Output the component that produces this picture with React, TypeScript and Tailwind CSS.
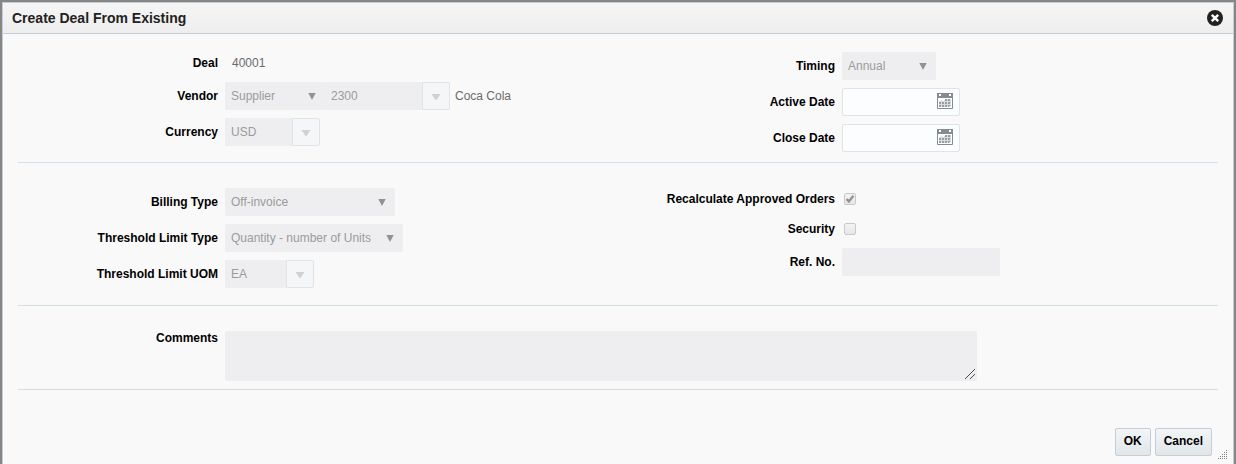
import type { ReactNode } from 'react'
import { clsx } from 'clsx'

const disabledField =
  'h-7 bg-[#eeeef0] pl-1.5 text-[12px] leading-4 text-[#9b9b9b] opacity-100'

function Row({
  id,
  label,
  side = 'left',
  short = false,
  children,
}: {
  id: string
  label: string
  side?: 'left' | 'right'
  short?: boolean
  children: ReactNode
}) {
  return (
    <div className={clsx('flex items-center gap-[7px]', short ? 'h-[22px]' : 'h-7')}>
      <label
        htmlFor={id}
        className={clsx(
          'shrink-0 text-right text-[12px] leading-4 font-bold text-black',
          side === 'left' ? 'w-[200px]' : 'w-[217px]',
        )}
      >
        {label}
      </label>
      {children}
    </div>
  )
}

function DisabledSelect({ id, value, className, label }: { id: string; value: string; className: string; label?: string }) {
  return (
    <div className={clsx('relative', className)}>
      <select
        id={id}
        disabled
        aria-label={label}
        className={clsx(disabledField, 'w-full appearance-none rounded-xs')}
      >
        <option>{value}</option>
      </select>
      <svg
        viewBox="0 0 8 7"
        className="pointer-events-none absolute top-[11px] right-[9px] h-[7px] w-2 text-[#929292]"
        aria-hidden="true"
      >
        <path d="M0.3 0H7.7L4 7Z" fill="currentColor" />
      </svg>
    </div>
  )
}

function LovInput({ id, value, className, label }: { id: string; value: string; className: string; label?: string }) {
  return (
    <div className="flex">
      <input
        id={id}
        type="text"
        disabled
        defaultValue={value}
        aria-label={label}
        className={clsx(disabledField, className)}
      />
      <button
        type="button"
        disabled
        aria-label={`Search ${label ?? id}`}
        className="flex size-7 items-center justify-center rounded-r-xs border border-[#dfe4ea] bg-[#f5f6f8] pt-0.5 text-[#d0d1d3]"
      >
        <svg viewBox="0 0 10 6" className="h-1.5 w-2.5" aria-hidden="true">
          <path d="M0.5 0H9.5L5.5 6H4.5Z" fill="currentColor" />
        </svg>
      </button>
    </div>
  )
}

function CalendarIcon() {
  return (
    <svg viewBox="0 0 16 16" className="size-4" aria-hidden="true">
      <path d="M0.5 0.5H15.5V15.5H0.5Z" fill="#fff" stroke="#868b90" />
      <path d="M0 0H16V5H0Z" fill="#868b90" />
      <path d="M2 1H4V3H2ZM12 1H14V3H12Z" fill="#fff" />
      <path d="M8 6H14V12L12 14H2V8H8Z" fill="#9a9ea2" />
      <path
        d="M2 8.5H14M2 11.5H14M4.5 7V14M7.5 7V14M10.5 6V14M13.5 6V12"
        stroke="#d9dcde"
        strokeWidth="1"
      />
    </svg>
  )
}

function DateInput({ id, label }: { id: string; label: string }) {
  return (
    <div className="relative w-[118px]">
      <input
        id={id}
        type="text"
        className="h-7 w-full rounded-xs border border-[#dfe4e7] bg-[#fcfdfe] pr-7 pl-1.5 text-[12px] text-[#333]"
      />
      <button type="button" aria-label={`Pick ${label}`} className="absolute top-[5px] right-[7px]">
        <CalendarIcon />
      </button>
    </div>
  )
}

function DisabledCheckbox({ id, checked }: { id: string; checked?: boolean }) {
  return (
    <span className="relative ml-0.5 size-3">
      <input
        id={id}
        type="checkbox"
        disabled
        defaultChecked={checked}
        className="block size-3 appearance-none rounded-xs border border-[#c9c9c9] bg-linear-to-b from-[#f3f3f3] to-[#e7e7e7]"
      />
      {checked && (
        <svg viewBox="0 0 12 12" className="pointer-events-none absolute inset-0 size-3" aria-hidden="true">
          <path d="M2.6 6L4.9 8.4L9.4 2.8" fill="none" stroke="#929292" strokeWidth="2.4" />
        </svg>
      )}
    </span>
  )
}

// dots form a triangle in the bottom right corner
function ResizeGrip() {
  const dots = []
  for (let row = 0; row < 5; row++) {
    for (let col = 4 - row; col < 5; col++) {
      dots.push(<rect key={`${row}-${col}`} x={col * 2} y={row * 2} width="1" height="1" />)
    }
  }
  return (
    <svg
      viewBox="0 0 9 9"
      className="absolute right-1.5 bottom-[5px] size-[9px]"
      fill="#808080"
      shapeRendering="crispEdges"
      aria-hidden="true"
    >
      {dots}
    </svg>
  )
}

const footerButton =
  'h-7 rounded-xs border border-[#c4ced7] bg-linear-to-b from-[#f3f5f6] to-[#e1e6ea] px-2 pb-0.5 text-[12px] leading-4 font-bold text-black'

export default function App() {
  return (
    <div className="flex min-h-screen flex-col bg-[#868686] px-0.5 pt-0.5 font-['Liberation_Sans',Arial,sans-serif]">
      <div
        role="dialog"
        aria-labelledby="dialog-title"
        className="relative flex grow flex-col border border-b-0 border-[#c4ced7] bg-[#f9f9f9]"
      >
        <header className="flex h-[31px] items-center justify-between border-b border-[#c4ced7] bg-linear-to-b from-[#f5f5f5] to-[#eeeeee] pr-2.5 pl-[9px]">
          <h1 id="dialog-title" className="text-[14px] leading-5 font-bold text-[#222]">
            Create Deal From Existing
          </h1>
          <button type="button" aria-label="Close">
            <svg viewBox="0 0 16 16" className="size-4" aria-hidden="true">
              <circle cx="8" cy="8" r="8" fill="#222" />
              <path d="M4.8 4.8L11.2 11.2M11.2 4.8L4.8 11.2" stroke="#fff" strokeWidth="2.4" />
            </svg>
          </button>
        </header>

        <form className="flex flex-col px-[15px]">
          <section className="grid grid-cols-2 border-b border-[#d3dfe9] pt-[18px] pb-2.5">
            <div className="flex flex-col gap-2">
              <Row id="deal" label="Deal" short>
                <output id="deal" className="pl-[7px] text-[12px] leading-4 text-[#6b6b6b]">
                  40001
                </output>
              </Row>
              <Row id="vendor" label="Vendor">
                <div className="flex items-center">
                  <DisabledSelect id="vendor" value="Supplier" className="w-[100px]" />
                  <LovInput id="vendor-id" value="2300" label="Vendor number" className="w-[97px]" />
                  <span className="pl-[5px] text-[12px] leading-4 text-[#6b6b6b]">Coca Cola</span>
                </div>
              </Row>
              <Row id="currency" label="Currency">
                <LovInput id="currency" value="USD" className="w-[67px]" />
              </Row>
            </div>
            <div className="flex flex-col gap-2">
              <Row id="timing" label="Timing" side="right">
                <DisabledSelect id="timing" value="Annual" className="w-[94px]" />
              </Row>
              <Row id="active-date" label="Active Date" side="right">
                <DateInput id="active-date" label="Active Date" />
              </Row>
              <Row id="close-date" label="Close Date" side="right">
                <DateInput id="close-date" label="Close Date" />
              </Row>
            </div>
          </section>

          <section className="grid grid-cols-2 border-b border-[#d3dde2] pt-[25px] pb-[17px]">
            <div className="flex flex-col gap-2">
              <Row id="billing-type" label="Billing Type">
                <DisabledSelect id="billing-type" value="Off-invoice" className="w-[170px]" />
              </Row>
              <Row id="limit-type" label="Threshold Limit Type">
                <DisabledSelect id="limit-type" value="Quantity - number of Units" className="w-[178px]" />
              </Row>
              <Row id="limit-uom" label="Threshold Limit UOM">
                <LovInput id="limit-uom" value="EA" className="w-[61px]" />
              </Row>
            </div>
            <div className="flex flex-col gap-2">
              <Row id="recalculate" label="Recalculate Approved Orders" side="right" short>
                <DisabledCheckbox id="recalculate" checked />
              </Row>
              <Row id="security" label="Security" side="right" short>
                <DisabledCheckbox id="security" />
              </Row>
              <Row id="ref-no" label="Ref. No." side="right">
                <input id="ref-no" type="text" disabled className={clsx(disabledField, 'w-[158px] rounded-xs')} />
              </Row>
            </div>
          </section>

          <section className="flex gap-[7px] border-b border-[#d3dde2] pt-[25px] pb-2">
            <label
              htmlFor="comments"
              className="w-[200px] shrink-0 text-right text-[12px] leading-[14px] font-bold text-black"
            >
              Comments
            </label>
            <div className="relative w-[752px]">
              <textarea
                id="comments"
                disabled
                className="block h-[50px] w-full resize-none rounded-xs bg-[#eeeef0] px-1.5 py-1 text-[12px] text-[#9b9b9b]"
              />
              <svg
                viewBox="0 0 10 10"
                className="pointer-events-none absolute right-0.5 bottom-0.5 size-2.5"
                stroke="#4a4a4a"
                aria-hidden="true"
              >
                <path d="M0 10L10 0M5 10L10 5" />
              </svg>
            </div>
          </section>
        </form>

        <footer className="flex justify-end gap-1 pt-[38px] pr-[21px] pb-2">
          <button type="button" className={footerButton}>
            OK
          </button>
          <button type="button" className={footerButton}>
            Cancel
          </button>
        </footer>
        <ResizeGrip />
      </div>
    </div>
  )
}
